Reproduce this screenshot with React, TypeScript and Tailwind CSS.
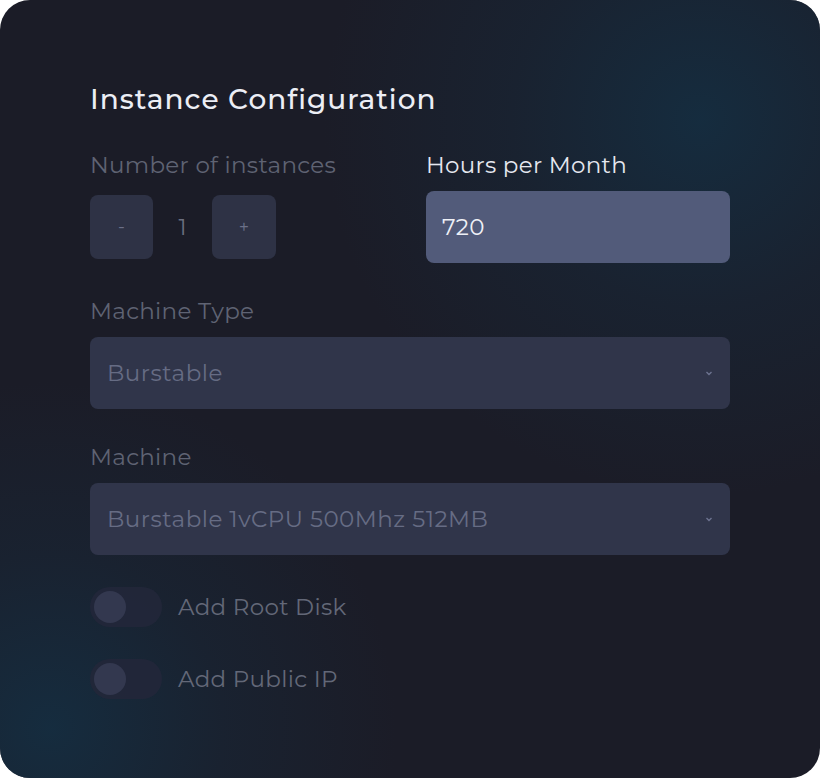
import React from "react";

const font = { fontFamily: "Montserrat, Inter, 'Noto Sans', sans-serif" };

function Chevron() {
  return (
    <svg width="10" height="10" viewBox="0 0 10 10" className="text-[#6d7390]">
      <path d="M2.5 4l2.5 2.5L7.5 4" fill="none" stroke="currentColor" strokeWidth="1.4" />
    </svg>
  );
}

function Select({ value }: { value: string }) {
  return (
    <div className="flex h-[72px] w-full items-center justify-between rounded-lg bg-[#30354a] pl-[17px] pr-[16px]">
      <span className="text-[23px] tracking-[0.5px] text-[#666c84]">{value}</span>
      <Chevron />
    </div>
  );
}

function Toggle({ label }: { label: string }) {
  return (
    <div className="flex items-center">
      <div className="flex h-[40px] w-[72px] items-center rounded-full bg-[#22273a]/90 pl-[4px]">
        <div className="h-[32px] w-[32px] rounded-full bg-[#33384f]" />
      </div>
      <span className="ml-[16px] text-[23px] tracking-[0.3px] text-[#636878]">{label}</span>
    </div>
  );
}

export default function App() {
  return (
    <div className="h-[778px] w-[820px] bg-white" style={font}>
      <div className="relative h-full w-full overflow-hidden rounded-[30px] bg-[#1b1c27]">
        <div className="pointer-events-none absolute -right-[260px] -top-[260px] h-[760px] w-[760px] rounded-full bg-[radial-gradient(circle,rgba(21,45,64,0.95)_0%,rgba(24,38,54,0.6)_35%,rgba(27,28,39,0)_70%)]" />
        <div className="pointer-events-none absolute -bottom-[300px] -left-[300px] h-[700px] w-[700px] rounded-full bg-[radial-gradient(circle,rgba(21,45,64,0.95)_0%,rgba(24,38,54,0.6)_35%,rgba(27,28,39,0)_70%)]" />
        <div className="relative flex flex-col px-[90px] pt-[82px]">
          <h1 className="text-[28px] font-medium leading-[34px] tracking-[1px] text-[#eceef5]">Instance Configuration</h1>

          <div className="mt-[34px] grid grid-cols-[320px_304px] gap-x-[16px]">
            <div className="flex flex-col">
              <span className="text-[23px] leading-[30px] tracking-[0.3px] text-[#5f6373]">Number of instances</span>
              <div className="mt-[15px] flex items-center">
                <button className="flex h-[64px] w-[63px] items-center justify-center rounded-lg bg-[#2e3245] text-[18px] text-[#6b7088]">-</button>
                <span className="w-[59px] text-center text-[22px] text-[#6b6f80]">1</span>
                <button className="flex h-[64px] w-[64px] items-center justify-center rounded-lg bg-[#2e3245] text-[18px] text-[#6b7088]">+</button>
              </div>
            </div>
            <div className="flex flex-col">
              <span className="text-[23px] leading-[30px] tracking-[0.3px] text-[#e6e8f0]">Hours per Month</span>
              <div className="mt-[11px] flex h-[72px] items-center rounded-lg bg-[#525b7a] pl-[16px]">
                <span className="text-[23px] tracking-[0.3px] text-[#eef0f6]">720</span>
              </div>
            </div>
          </div>

          <span className="mt-[33px] text-[23px] leading-[30px] tracking-[0.3px] text-[#5f6373]">Machine Type</span>
          <div className="mt-[11px]">
            <Select value="Burstable" />
          </div>

          <span className="mt-[33px] text-[23px] leading-[30px] tracking-[0.3px] text-[#5f6373]">Machine</span>
          <div className="mt-[11px]">
            <Select value="Burstable 1vCPU 500Mhz 512MB" />
          </div>

          <div className="mt-[32px] flex flex-col gap-[32px]">
            <Toggle label="Add Root Disk" />
            <Toggle label="Add Public IP" />
          </div>
        </div>
      </div>
    </div>
  );
}
